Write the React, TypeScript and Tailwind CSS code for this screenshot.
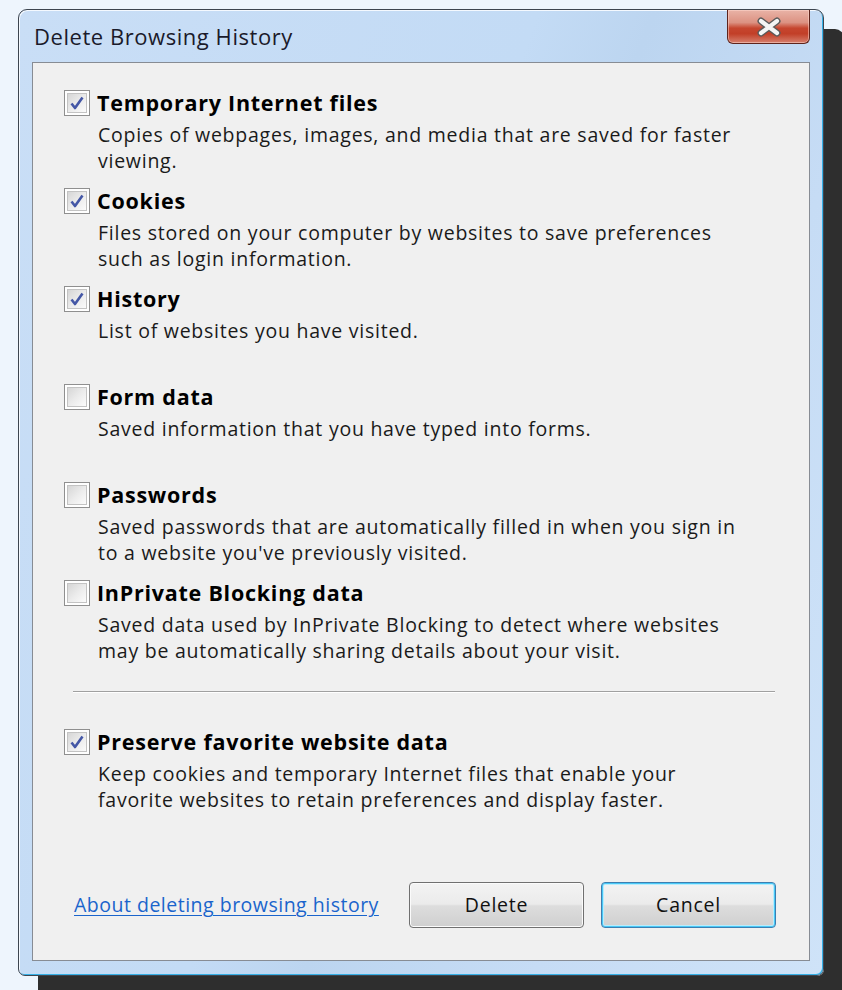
import React from "react";

type Option = {
  label: string;
  lines: string[];
  checked: boolean;
};

const options: Option[] = [
  {
    label: "Temporary Internet files",
    lines: ["Copies of webpages, images, and media that are saved for faster", "viewing."],
    checked: true,
  },
  {
    label: "Cookies",
    lines: ["Files stored on your computer by websites to save preferences", "such as login information."],
    checked: true,
  },
  {
    label: "History",
    lines: ["List of websites you have visited."],
    checked: true,
  },
  {
    label: "Form data",
    lines: ["Saved information that you have typed into forms."],
    checked: false,
  },
  {
    label: "Passwords",
    lines: ["Saved passwords that are automatically filled in when you sign in", "to a website you've previously visited."],
    checked: false,
  },
  {
    label: "InPrivate Blocking data",
    lines: ["Saved data used by InPrivate Blocking to detect where websites", "may be automatically sharing details about your visit."],
    checked: false,
  },
];

const Checkbox = ({ checked }: { checked: boolean }) => (
  <div className="w-[26px] h-[26px] shrink-0 border border-[#8f8f8f] bg-white p-[2px]">
    <div className="w-full h-full border border-[#c3c3c3] bg-[linear-gradient(135deg,#d6d6d6_0%,#ebebeb_50%,#fbfbfb_100%)] flex items-center justify-center">
      {checked && (
        <svg width="16" height="16" viewBox="0 0 16 16">
          <path d="M2.5 8.5 L6 13 L13.5 2.5" fill="none" stroke="#4457a6" strokeWidth="2.6" strokeLinejoin="round" />
        </svg>
      )}
    </div>
  </div>
);

const OptionRow = ({ option, fixed }: { option: Option; fixed?: boolean }) => (
  <div className={`flex gap-[7px] ${fixed ? "h-[98px]" : ""}`}>
    <Checkbox checked={option.checked} />
    <div className="flex flex-col">
      <div className="font-bold text-[21.5px] tracking-[0.75px] leading-[26px] text-black">{option.label}</div>
      <div className="mt-[6px] text-[19.5px] tracking-[0.75px] leading-[25.5px] text-[#1a1a1a] pl-[1px]">
        {option.lines.map((l) => (
          <div key={l} className="whitespace-nowrap">
            {l}
          </div>
        ))}
      </div>
    </div>
  </div>
);

const CloseButton = () => (
  <div className="w-[83px] h-[34px] rounded-b-[6px] border border-t-0 border-[#5e241c] bg-[linear-gradient(to_bottom,#e9b3a7_0%,#dc9282_38%,#c6462f_55%,#c23f28_72%,#d6806e_100%)] shadow-[inset_0_0_0_1px_rgba(255,220,210,0.5)] flex items-center justify-center">
    <svg width="26" height="20" viewBox="0 0 26 20">
      <path d="M5 4 L21 16 M21 4 L5 16" stroke="#5a5a5a" strokeWidth="7" strokeLinecap="round" />
      <path d="M5 4 L21 16 M21 4 L5 16" stroke="#f4f4f4" strokeWidth="4.2" strokeLinecap="round" />
    </svg>
  </div>
);

const buttonBase =
  "w-[175px] h-[46px] rounded-[4px] text-[19.5px] tracking-[0.75px] text-[#111] bg-[linear-gradient(to_bottom,#f3f3f3_0%,#ebebeb_48%,#dddddd_52%,#cfcfcf_100%)] flex items-center justify-center";

export default function App() {
  return (
    <div
      className="w-[842px] h-[990px] overflow-hidden bg-[#eef5fd] pl-[18px] pt-[9px]"
      style={{ fontFamily: '"Open Sans", "Noto Sans", sans-serif' }}
    >
      {/* window frame */}
      <div className="w-[806px] h-[967px] flex flex-col rounded-t-[9px] rounded-b-[7px] border border-[#3d4550] bg-[linear-gradient(110deg,#c9def6_0%,#c3dbf5_45%,#bcd5f0_55%,#c6dcf5_75%,#cfe3f8_100%)] shadow-[20px_20px_0_#2e2e2e,inset_1px_1px_0_#f4f9ff,inset_-1px_-1px_0_#35b0e6]">
        {/* title bar */}
        <div className="h-[52px] flex items-start justify-between pl-[15px] pr-[13px]">
          <div className="pt-[12px] text-[22px] tracking-[0.55px] leading-[28px] text-[#1a1a2a]">Delete Browsing History</div>
          <CloseButton />
        </div>

        {/* content panel */}
        <div className="flex-1 mx-[13px] mb-[14px] border border-[#878c94] bg-[#f0f0f0] flex flex-col pt-[27px]">
          <div className="pl-[31px] flex flex-col">
            {options.map((o) => (
              <OptionRow key={o.label} option={o} fixed />
            ))}
          </div>

          <div className="mt-[13px] ml-[40px] mr-[34px] h-[2px] border-t border-[#a0a0a0] border-b border-b-white" />

          <div className="pl-[31px] mt-[36px]">
            <OptionRow
              option={{
                label: "Preserve favorite website data",
                lines: [
                  "Keep cookies and temporary Internet files that enable your",
                  "favorite websites to retain preferences and display faster.",
                ],
                checked: true,
              }}
            />
          </div>

          <div className="mt-auto flex items-center justify-between pl-[41px] pr-[33px] pb-[32px]">
            <a href="#" className="text-[19.5px] tracking-[0.5px] text-[#1a64cc] underline underline-offset-[3px]">
              About deleting browsing history
            </a>
            <div className="flex gap-[17px]">
              <button className={`${buttonBase} border border-[#707070] shadow-[inset_0_0_0_1px_#fbfbfb]`}>Delete</button>
              <button className={`${buttonBase} border border-[#3c7fb1] shadow-[inset_0_0_0_1px_#48c8f7,inset_0_0_0_2px_#b9ecfc]`}>
                Cancel
              </button>
            </div>
          </div>
        </div>
      </div>
    </div>
  );
}
